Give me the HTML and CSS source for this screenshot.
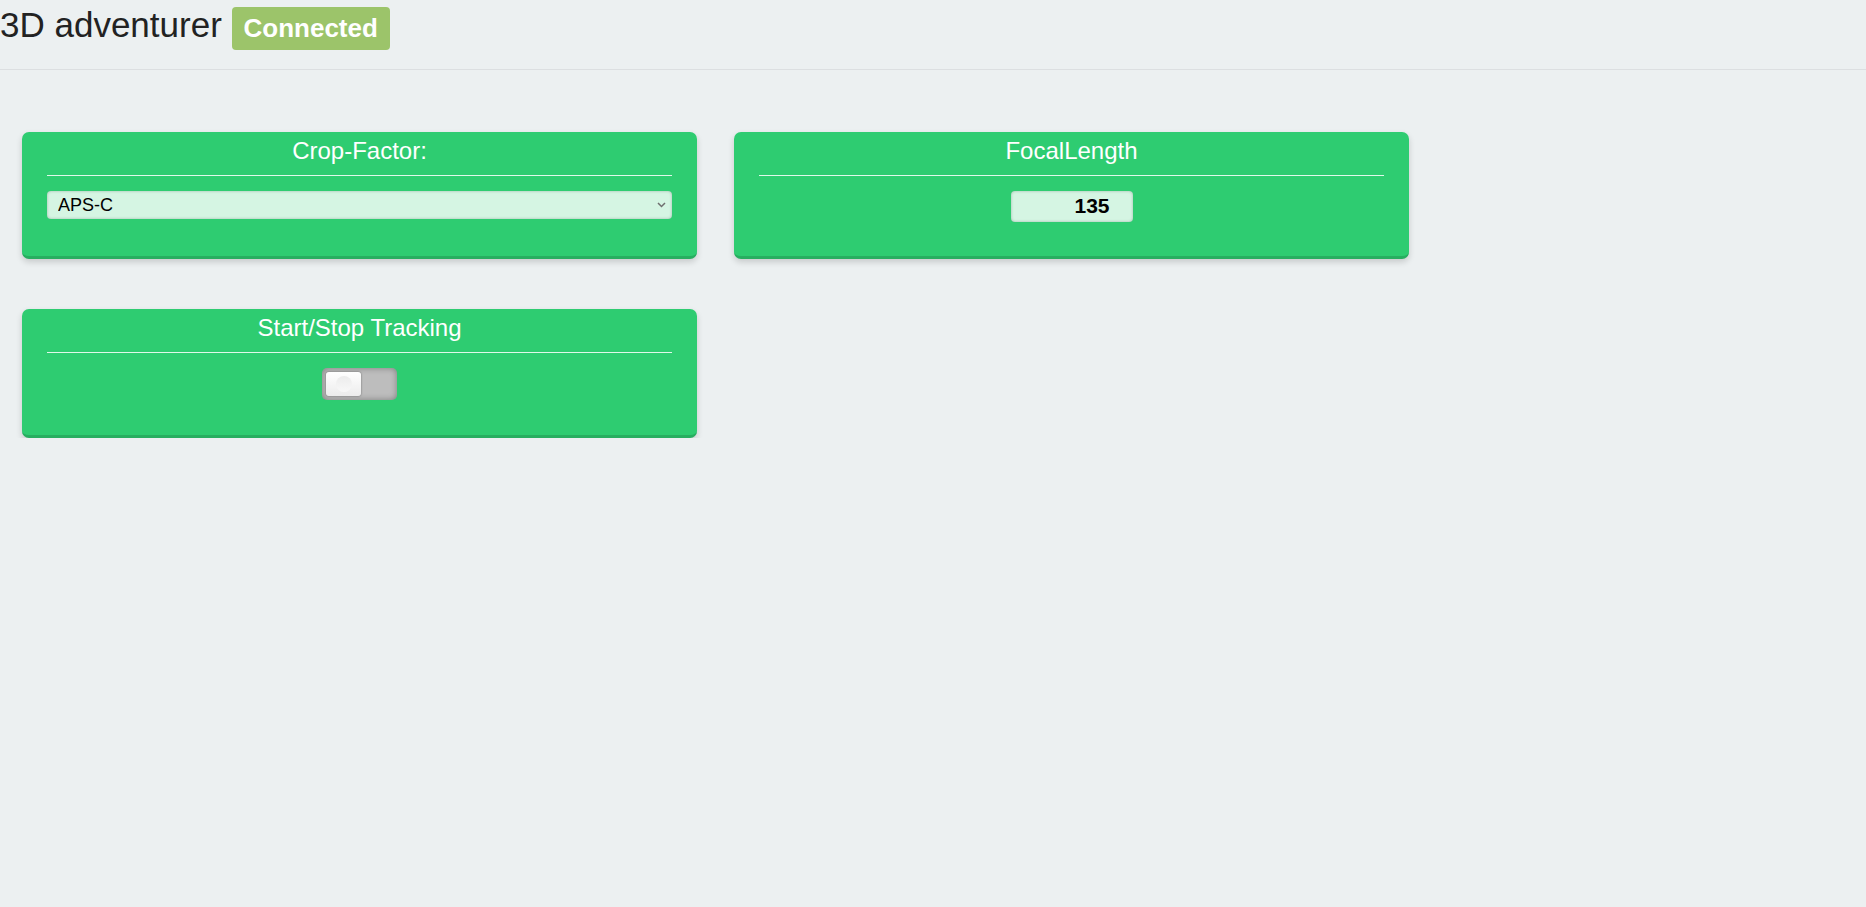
FILE: index.html
```html
<!DOCTYPE html>
<html lang="en">
<head>
<meta charset="utf-8">
<title>3D adventurer</title>
<link rel="stylesheet" href="styles.css">
</head>
<body>
<header class="main-header">
  <h1 class="app-title">3D adventurer <span class="badge">Connected</span></h1>
</header>
<main class="cards">
  <section class="card">
    <div class="card-title">Crop-Factor:</div>
    <hr class="card-rule">
    <div class="select-wrap">
      <select class="select">
        <option>APS-C</option>
        <option>Full Frame</option>
        <option>MFT</option>
      </select>
      <svg class="chevron" width="9" height="6" viewBox="0 0 9 6"><path d="M1 1l3.5 3.5L8 1" fill="none" stroke="#6f6f6f" stroke-width="1.5"/></svg>
    </div>
  </section>
  <section class="card">
    <div class="card-title">FocalLength</div>
    <hr class="card-rule">
    <input class="number" type="text" value="135">
  </section>
  <section class="card card-switch">
    <div class="card-title">Start/Stop Tracking</div>
    <hr class="card-rule">
    <div class="switch"><div class="knob"><span class="knob-dot"></span></div></div>
  </section>
</main>
</body>
</html>
```

FILE: styles.css
```css
html, body {
  margin: 0;
  padding: 0;
}
body {
  background: #ecf0f1;
  font-family: "Liberation Sans", Arial, Helvetica, sans-serif;
  color: #222;
}
.main-header {
  box-sizing: border-box;
  height: 70px;
  padding-top: 3px;
  border-bottom: 1px solid #dcdfe1;
}
.app-title {
  margin: 0;
  font-size: 35px;
  font-weight: normal;
  line-height: 43px;
  color: #222;
  white-space: nowrap;
}
.badge {
  display: inline-block;
  background: #9cc46a;
  color: #fff;
  font-size: 26px;
  font-weight: bold;
  line-height: 42px;
  padding: 0 12px 1px;
  border-radius: 4px;
}
.cards {
  display: flex;
  flex-wrap: wrap;
  align-items: stretch;
  column-gap: 37px;
  row-gap: 50px;
  padding: 62px 0 0 22px;
}
.card {
  width: 675px;
  box-sizing: border-box;
  padding: 5px 25px 34px;
  background: #2ecc71;
  border-bottom: 3px solid #27ae60;
  border-radius: 7px;
  box-shadow: 0 3px 6px 0 rgba(0, 0, 0, 0.16);
  text-align: center;
}
.card-switch {
  padding-bottom: 35px;
}
.card-title {
  font-size: 24px;
  line-height: 28px;
  color: #fff;
}
.card-rule {
  margin: 10px 0 15px;
  border: 0;
  height: 1px;
  background: rgba(255, 255, 255, 0.85);
}
.select-wrap {
  position: relative;
}
.select {
  display: block;
  width: 100%;
  height: 28px;
  margin: 0;
  padding: 0 11px;
  border: 0;
  border-radius: 4px;
  background: #d5f5e3;
  box-shadow: inset 0 0 3px rgba(0, 0, 0, 0.25);
  font-family: "Liberation Sans", Arial, sans-serif;
  font-size: 18px;
  color: #000;
  -webkit-appearance: none;
  appearance: none;
  outline: none;
}
.chevron {
  position: absolute;
  right: 6px;
  top: 11px;
}
.number {
  display: inline-block;
  width: 122px;
  height: 31px;
  box-sizing: border-box;
  margin: 0;
  padding: 0 23px 2px 8px;
  border: 0;
  border-radius: 4px;
  background: #d5f5e3;
  box-shadow: inset 0 0 3px rgba(0, 0, 0, 0.25);
  font-family: "Liberation Sans", Arial, sans-serif;
  font-size: 21px;
  font-weight: bold;
  color: #000;
  text-align: right;
  outline: none;
  vertical-align: top;
}
.switch {
  display: inline-block;
  position: relative;
  width: 75px;
  height: 32px;
  border-radius: 5px;
  background: #bdbdbd;
  box-shadow: inset 0 0 6px rgba(0, 0, 0, 0.35);
  vertical-align: top;
}
.knob {
  position: absolute;
  left: 4px;
  top: 4px;
  width: 35px;
  height: 24px;
  border-radius: 3px;
  background: linear-gradient(#ffffff, #ececec);
  box-shadow: 0 0 2px rgba(0, 0, 0, 0.5);
  display: flex;
  align-items: center;
  justify-content: center;
}
.knob-dot {
  width: 16px;
  height: 16px;
  border-radius: 50%;
  background: linear-gradient(#ececec, #f8f8f8);
}
```
